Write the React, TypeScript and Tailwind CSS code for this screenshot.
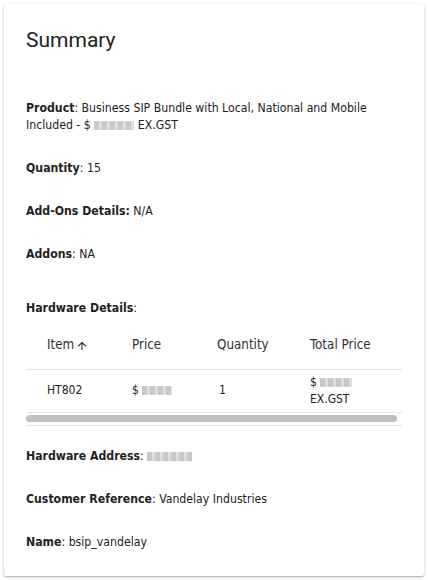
import React from 'react';
import { ArrowUp } from 'lucide-react';

const Blur = ({ w }: { w: number }) => (
  <span
    className="relative top-[1px] inline-block h-[9px] align-baseline bg-[repeating-linear-gradient(90deg,#c9c9c9_0px,#c9c9c9_5px,#dedede_5px,#dedede_8px)] blur-[0.6px]"
    style={{ width: w }}
  />
);

function Field({ label, children, boldColon = false }: { label: string; children?: React.ReactNode; boldColon?: boolean }) {
  return (
    <p className="text-[12.2px] leading-[17px] text-[#222]">
      <b className="font-bold">{label}{boldColon ? ':' : ''}</b>
      {boldColon ? ' ' : ': '}
      {children}
    </p>
  );
}

export default function App() {
  return (
    <div className="min-h-[580px] bg-white p-1 font-['DejaVu_Sans_Condensed','DejaVu_Sans',sans-serif]">
      <div className="rounded-[2px] bg-white shadow-[0_1px_3px_rgba(0,0,0,0.25),0_1px_1px_rgba(0,0,0,0.12)] px-[22px] pt-[22px] pb-[20px] min-h-[572px]">
        <h1 className="font-['Roboto',sans-serif] text-[21px] leading-7 text-[#222] font-normal">Summary</h1>

        <div className="mt-[46px] flex flex-col gap-[26px]">
          <Field label="Product">
            Business SIP Bundle with Local, National and Mobile Included - $ <Blur w={40} /> EX.GST
          </Field>
          <Field label="Quantity">15</Field>
          <Field label="Add-Ons Details" boldColon>N/A</Field>
          <Field label="Addons">NA</Field>
        </div>

        <div className="mt-[37px]">
          <Field label="Hardware Details" />
          <div className="mt-[4px] border-b border-[#e4e4e4]">
            <table className="w-full text-left text-[#333]">
              <thead>
                <tr className="h-[48px] text-[13.3px] border-b border-[#e4e4e4]">
                  <th className="pl-[21px] font-normal w-[106px]">
                    <span className="inline-flex items-center gap-[2px]">
                      Item <ArrowUp size={12} strokeWidth={2.2} className="mt-[2px]" />
                    </span>
                  </th>
                  <th className="font-normal w-[85px]">Price</th>
                  <th className="font-normal w-[93px]">Quantity</th>
                  <th className="font-normal">Total Price</th>
                </tr>
              </thead>
              <tbody>
                <tr className="h-[43px] text-[12px] leading-[17px] text-[#222] border-b border-[#e4e4e4]">
                  <td className="pl-[21px]">HT802</td>
                  <td>$ <Blur w={30} /></td>
                  <td className="pl-[2px]">1</td>
                  <td>
                    $ <Blur w={32} />
                    <br />
                    EX.GST
                  </td>
                </tr>
              </tbody>
            </table>
            <div className="h-[12px] flex items-center">
              <div className="h-[7px] w-[371px] rounded-full bg-[#c1c1c1]" />
            </div>
          </div>
        </div>

        <div className="mt-[22px] flex flex-col gap-[26px]">
          <Field label="Hardware Address"><Blur w={45} /></Field>
          <Field label="Customer Reference">Vandelay Industries</Field>
          <Field label="Name">bsip_vandelay</Field>
        </div>
      </div>
    </div>
  );
}
